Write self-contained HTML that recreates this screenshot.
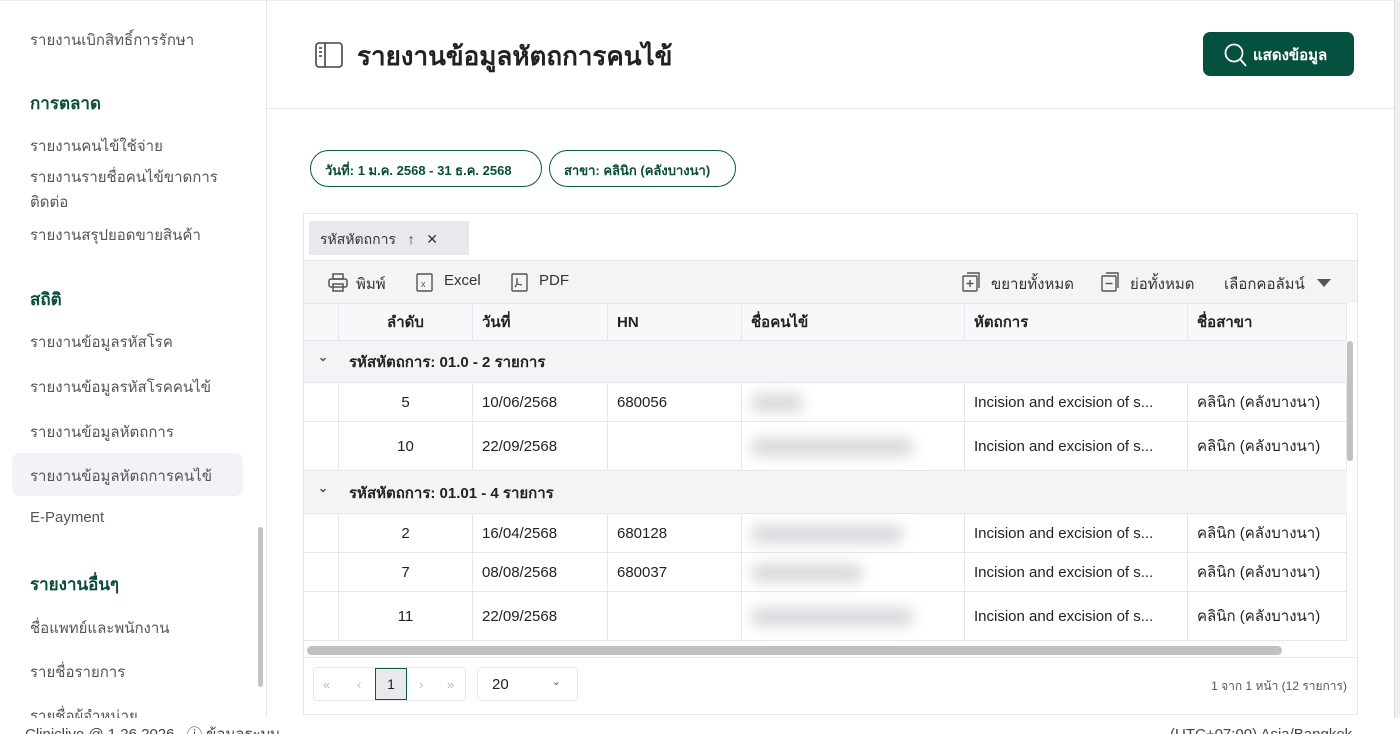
<!DOCTYPE html><html><head><meta charset="utf-8"><style>
*{box-sizing:border-box;margin:0;padding:0}
html,body{width:1400px;height:734px;overflow:hidden}
body{background:#fff;font-family:"Liberation Sans",sans-serif;color:#222;position:relative}
.side{position:absolute;left:0;top:0;width:267px;height:718px;border-right:1px solid #e5e7eb;overflow:hidden}
.side div{position:absolute;left:30px;font-size:15px;color:#555}
.side .h{font-weight:bold;color:#0b4d3c;font-size:17px}
.sel{position:absolute;left:12px;top:453px;width:231px;height:43px;background:#f1f3f6;border-radius:8px}
.sb{position:absolute;left:258px;top:527px;width:5px;height:160px;background:#c4c4c4;border-radius:3px}
.hdr{position:absolute;left:267px;top:108px;width:1127px;border-top:1px solid #e5e7eb}
.title{position:absolute;left:357px;top:36px;font-size:26px;font-weight:bold;color:#222}
.btn{position:absolute;left:1203px;top:32px;width:151px;height:44px;background:#05503f;border-radius:7px;color:#fff;font-weight:bold;font-size:15px;padding:11px 0 0 50px}
.chip{position:absolute;top:150px;height:37px;border:1.5px solid #0b5a45;border-radius:19px;font-size:13px;font-weight:bold;color:#0b4d3c;padding:9px 0 0 14px}
.panel{position:absolute;left:303px;top:213px;width:1055px;height:502px;border:1px solid #e5e7eb;overflow:hidden}
.grp{position:absolute;left:5px;top:7px;width:160px;height:34px;background:#e8e9ec;font-size:14px;padding:8px 0 0 11px;color:#333}
.tool{position:absolute;left:0;top:46px;width:1055px;height:43px;background:#f3f4f6;border-top:1px solid #e5e7eb;font-size:15px;color:#333}
.tool span{position:absolute;top:11px}
.row{position:absolute;left:0;width:1043px;border-bottom:1px solid #e5e7eb;font-size:15px}
.c{position:absolute;top:0;height:100%;border-left:1px solid #e5e7eb;display:flex;align-items:center}
.blur{position:absolute;left:10px;top:10px;height:18px;background:#d6d8db;filter:blur(7px);border-radius:4px}
.foot{position:absolute;top:726px;font-size:15px;color:#444;line-height:18px}
</style></head><body>
<div style="position:absolute;left:0;top:0;width:1400px;border-top:1px solid #eee"></div>
<div style="position:absolute;left:1394px;top:0;width:6px;height:718px;background:#f0f0f0;border-left:1px solid #ddd"></div>
<div class="side">
<div style="top:28px">รายงานเบิกสิทธิ์การรักษา</div>
<div class="h" style="top:90px">การตลาด</div>
<div style="top:134px">รายงานคนไข้ใช้จ่าย</div>
<div style="top:165px;line-height:25px;width:200px">รายงานรายชื่อคนไข้ขาดการติดต่อ</div>
<div style="top:223px">รายงานสรุปยอดขายสินค้า</div>
<div class="h" style="top:286px">สถิติ</div>
<div style="top:330px">รายงานข้อมูลรหัสโรค</div>
<div style="top:375px">รายงานข้อมูลรหัสโรคคนไข้</div>
<div style="top:420px">รายงานข้อมูลหัตถการ</div>
<span class="sel"></span>
<div style="top:464px">รายงานข้อมูลหัตถการคนไข้</div>
<div style="top:509px">E-Payment</div>
<div class="h" style="top:571px">รายงานอื่นๆ</div>
<div style="top:616px">ชื่อแพทย์และพนักงาน</div>
<div style="top:660px">รายชื่อรายการ</div>
<div style="top:704px">รายชื่อผู้จำหน่าย</div>
<span class="sb"></span>
</div>
<svg style="position:absolute;left:315px;top:42px" width="28" height="26" viewBox="0 0 28 26" fill="none" stroke="#444" stroke-width="1.6"><rect x="1" y="1" width="26" height="24" rx="3"/><line x1="10" y1="1" x2="10" y2="25"/><line x1="4" y1="6" x2="7" y2="6"/><line x1="4" y1="10" x2="7" y2="10"/><line x1="4" y1="14" x2="7" y2="14"/></svg>
<div class="title">รายงานข้อมูลหัตถการคนไข้</div>
<div class="btn"><svg style="position:absolute;left:20px;top:10px" width="26" height="26" viewBox="0 0 26 26" fill="none" stroke="#fff" stroke-width="1.8"><circle cx="11" cy="11" r="8.5"/><line x1="17" y1="17" x2="23" y2="24"/></svg>แสดงข้อมูล</div>
<div class="hdr"></div>
<div class="chip" style="left:310px;width:232px">วันที่: 1 ม.ค. 2568 - 31 ธ.ค. 2568</div>
<div class="chip" style="left:549px;width:187px">สาขา: คลินิก (คลังบางนา)</div>
<div class="panel">
<div class="grp">รหัสหัตถการ&nbsp;&nbsp;&nbsp;↑&nbsp;&nbsp;&nbsp;✕</div>
<div class="tool">
<svg style="position:absolute;left:24px;top:12px" width="20" height="20" viewBox="0 0 20 20" fill="none" stroke="#555" stroke-width="1.5"><rect x="5" y="1" width="10" height="5"/><rect x="1" y="6" width="18" height="8" rx="2"/><rect x="5" y="11" width="10" height="7"/></svg>
<span style="left:52px">พิมพ์</span>
<svg style="position:absolute;left:112px;top:12px" width="18" height="20" viewBox="0 0 18 20" fill="none" stroke="#555" stroke-width="1.4"><rect x="1" y="1" width="15" height="17" rx="1"/><text x="5" y="14" font-size="9" fill="#555" stroke="none">x</text></svg>
<span style="left:140px">Excel</span>
<svg style="position:absolute;left:207px;top:12px" width="18" height="20" viewBox="0 0 18 20" fill="none" stroke="#555" stroke-width="1.4"><rect x="1" y="1" width="15" height="17" rx="1"/><path d="M6 5v6l-2 3M6 11l5 1"/></svg>
<span style="left:235px">PDF</span>
<svg style="position:absolute;left:658px;top:10px" width="20" height="22" viewBox="0 0 20 22" fill="none" stroke="#555" stroke-width="1.4"><rect x="1" y="5" width="14" height="15" rx="1"/><path d="M5 2h12v15"/><path d="M8 9v7M4.5 12.5h7"/></svg>
<span style="left:687px">ขยายทั้งหมด</span>
<svg style="position:absolute;left:797px;top:10px" width="20" height="22" viewBox="0 0 20 22" fill="none" stroke="#555" stroke-width="1.4"><rect x="1" y="5" width="14" height="15" rx="1"/><path d="M5 2h12v15"/><path d="M4.5 12.5h7"/></svg>
<span style="left:826px">ย่อทั้งหมด</span>
<span style="left:920px">เลือกคอลัมน์</span>
<svg style="position:absolute;left:1013px;top:18px" width="14" height="8"><path d="M0 0h14L7 8z" fill="#555"/></svg>
</div>
<div class="row" style="top:89px;height:38px;background:#f7f8fa;font-weight:bold;border-top:1px solid #e5e7eb">
<div class="c" style="left:34px;width:134px;justify-content:center">ลำดับ</div>
<div class="c" style="left:168px;width:135px;padding-left:9px">วันที่</div>
<div class="c" style="left:303px;width:134px;padding-left:9px">HN</div>
<div class="c" style="left:437px;width:223px;padding-left:9px">ชื่อคนไข้</div>
<div class="c" style="left:660px;width:223px;padding-left:9px">หัตถการ</div>
<div class="c" style="left:883px;width:160px;padding-left:9px;border-right:1px solid #e5e7eb">ชื่อสาขา</div>
</div>
<div id="body"></div>
<div style="position:absolute;left:3px;top:432px;width:975px;height:9px;background:#c1c1c1;border-radius:5px"></div>
<div style="position:absolute;left:1043px;top:127px;width:6px;height:120px;background:#c1c1c1;border-radius:3px"></div>
<div style="position:absolute;left:0;top:443px;width:1055px;border-top:1px solid #e5e7eb"></div>
<div style="position:absolute;left:9px;top:453px;width:153px;height:34px;border:1px solid #e5e7eb;border-radius:4px;color:#bbb;font-size:13px">
<span style="position:absolute;left:9px;top:9px">«</span><span style="position:absolute;left:43px;top:9px">‹</span>
<div style="position:absolute;left:61px;top:0;width:32px;height:32px;background:#e8e9ec;border:1px solid #0b5a45;color:#222;text-align:center;padding-top:7px;font-size:14px">1</div>
<span style="position:absolute;left:105px;top:9px">›</span><span style="position:absolute;left:133px;top:9px">»</span></div>
<div style="position:absolute;left:173px;top:453px;width:101px;height:34px;border:1px solid #e5e7eb;border-radius:4px;font-size:15px;padding:8px 14px">20<span style="position:absolute;right:16px;top:7px;font-size:11px;color:#555">⌄</span></div>
<div style="position:absolute;right:10px;top:463px;font-size:12px;color:#555">1 จาก 1 หน้า (12 รายการ)</div>
</div>
<div class="foot" style="left:25px">Cliniclive @ 1.26.2026 &nbsp; ⓘ ข้อมูลระบบ</div>
<div class="foot" style="left:1170px">(UTC+07:00) Asia/Bangkok</div>
<script>
var rows=[["g","รหัสหัตถการ: 01.0 - 2 รายการ",340,42],["5","10/06/2568",382,39,"680056",50],["10","22/09/2568",421,49,"",160],["g","รหัสหัตถการ: 01.01 - 4 รายการ",470,43],["2","16/04/2568",513,39,"680128",150],["7","08/08/2568",552,39,"680037",110],["11","22/09/2568",591,49,"",160]];
var h="";rows.forEach(function(r){var t=r[2]-213;if(r[0]=="g"){h+='<div class="row" style="top:'+t+'px;height:'+r[3]+'px;background:#f3f4f6;font-weight:bold"><span style="position:absolute;left:14px;top:'+(r[3]/2-12)+'px;font-size:12px;color:#555">⌄</span><span style="position:absolute;left:45px;top:'+(r[3]/2-12)+'px">'+r[1]+'</span></div>';}else{h+='<div class="row" style="top:'+t+'px;height:'+r[3]+'px"><div class="c" style="left:34px;width:134px;justify-content:center">'+r[0]+'</div><div class="c" style="left:168px;width:135px;padding-left:9px">'+r[1]+'</div><div class="c" style="left:303px;width:134px;padding-left:9px">'+r[4]+'</div><div class="c" style="left:437px;width:223px"><span class="blur" style="width:'+r[5]+'px;top:'+(r[3]/2-9)+'px"></span></div><div class="c" style="left:660px;width:223px;padding-left:9px">Incision and excision of s...</div><div class="c" style="left:883px;width:160px;padding-left:9px;border-right:1px solid #e5e7eb">คลินิก (คลังบางนา)</div></div>';}});
document.getElementById("body").innerHTML=h;
</script>
</body></html>
